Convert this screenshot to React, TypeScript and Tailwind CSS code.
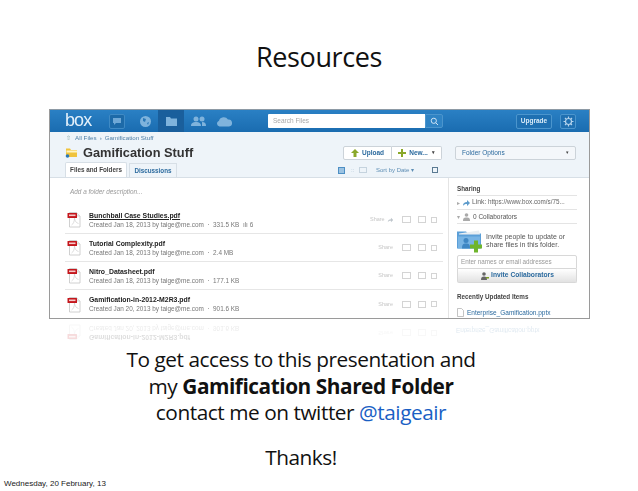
import React from "react";

const sans = "font-['Open_Sans',sans-serif]";

function PdfIcon() {
  return (
    <svg width="15" height="17" viewBox="0 0 15 17" className="shrink-0">
      <path d="M2.500 1.500h7l3.500 3.500v11h-10.500z" fill="#fff" stroke="#c4c4c4" strokeWidth="0.8" />
      <path d="M9.500 1.500v3.500h3.500" fill="#eee" stroke="#c4c4c4" strokeWidth="0.6" />
      <path d="M4.500 14c2-1 3-4 3-7 0 3 2 5 4 5.500" fill="none" stroke="#cfcfcf" strokeWidth="0.7" />
      <rect x="0.500" y="2" width="9.500" height="5" rx="0.500" fill="#c4161c" />
      <rect x="2" y="3.500" width="6.500" height="1.600" fill="#f5c9c9" />
    </svg>
  );
}

function RowActions({ arrow }: { arrow?: boolean }) {
  return (
    <div className="flex items-center w-[73px] shrink-0 text-[5.500px] text-[#c6c6c6]">
      <span className="w-[23px] flex items-center justify-end gap-[2px]">
        Share
        {arrow && (
          <svg width="8" height="8" viewBox="0 0 8 8"><path d="M1 7c0-3 1.500-4 4-4V1l3 3-3 3V5c-2 0-3 .5-4 2z" fill="#bfc6cc" /></svg>
        )}
      </span>
      <span className="ml-[9px] w-[9px] h-[7px] border border-[#d4d4d4]" />
      <span className="ml-[7px] w-[8px] h-[7px] border border-[#d4d4d4]" />
      <span className="ml-[5px] w-[6px] h-[6px] border border-[#d4d4d4]" />
    </div>
  );
}

const files = [
  { n: "Bunchball Case Studies.pdf", m: "Created Jan 18, 2013 by taige@me.com  ·  331.5 KB  ılı 6", u: true, a: true },
  { n: "Tutorial Complexity.pdf", m: "Created Jan 18, 2013 by taige@me.com  ·  2.4 MB" },
  { n: "Nitro_Datasheet.pdf", m: "Created Jan 18, 2013 by taige@me.com  ·  177.1 KB" },
  { n: "Gamification-in-2012-M2R3.pdf", m: "Created Jan 20, 2013 by taige@me.com  ·  901.6 KB" },
];

function FileRow({ f }: { f: (typeof files)[number] }) {
  return (
    <div className="h-[28px] flex items-center pl-[2px] border-b border-[#e6e6e6] last:border-b-0">
      <PdfIcon />
      <div className="ml-[7px] flex-1 leading-[9px]">
        <div className={`text-[6.900px] font-bold text-[#222] ${f.u ? "underline" : ""}`}>{f.n}</div>
        <div className="text-[6.400px] text-[#777] whitespace-pre">{f.m}</div>
      </div>
      <RowActions arrow={f.a} />
    </div>
  );
}

function TopBar() {
  return (
    <div className="h-[23px] flex items-center bg-gradient-to-b from-[#2a80c4] to-[#1a6cb0] border-t border-[#8d9aa5]">
      <span className="ml-[15px] w-[27px] text-[18px] leading-[17px] text-[#e4f1fb] tracking-[-0.9px] -mt-[2px]">box</span>
      <span className="ml-[17px] w-[16px] h-[15px] flex items-center justify-center rounded-[2px] border border-[#3f8ac4] bg-[#1d6aa8]">
        <svg width="10" height="9" viewBox="0 0 10 9"><path d="M1 1h8v5H4L2 8V6H1z" fill="#6fa8d6" /></svg>
      </span>
      <svg className="ml-[14px]" width="13" height="13" viewBox="0 0 13 13"><circle cx="6.500" cy="6.500" r="5.500" fill="#7fb3dc" /><path d="M4 3l3 1-1 3-2-1zM8 8l2-1-1 3z" fill="#2a78b8" /></svg>
      <span className="ml-[6px] w-[26px] h-[22px] flex items-center justify-center bg-[#1a5f9c]">
        <svg width="13" height="11" viewBox="0 0 13 11"><path d="M1 1h4l1 1.500h6V10H1z" fill="#7fb3dc" /></svg>
      </span>
      <svg className="ml-[6px]" width="17" height="11" viewBox="0 0 17 11"><circle cx="6" cy="3" r="2.500" fill="#7fb3dc" /><circle cx="12" cy="3" r="2.500" fill="#7fb3dc" /><path d="M1 10c0-3 2-4 5-4s5 1 5 4zM12 6c3 0 4 1.500 4 4h-4z" fill="#7fb3dc" /></svg>
      <svg className="ml-[9px]" width="17" height="11" viewBox="0 0 17 11"><path d="M3.500 10.500a3 3 0 0 1-.5-5.800A5 5 0 0 1 12 3.500a3.500 3.500 0 0 1 1 7z" fill="#7fb3dc" /></svg>
      <div className="ml-[35px] w-[157px] h-[14px] bg-white rounded-l-[1px] flex items-center pl-[5px] text-[6.500px] text-[#a8a8a8]">Search Files</div>
      <div className="w-[18px] h-[14px] bg-[#2f83c4] border border-[#4b95cd] rounded-r-[2px] flex items-center justify-center">
        <svg width="9" height="9" viewBox="0 0 9 9" fill="none" stroke="#cfe4f5" strokeWidth="1"><circle cx="3.800" cy="3.800" r="2.600" /><path d="M5.700 5.700L8 8" /></svg>
      </div>
      <div className="ml-[73px] w-[36px] h-[15px] rounded-[2px] border border-[#4b95cd] bg-[#1f70b2] text-[6.500px] font-bold text-[#d9ebf8] flex items-center justify-center">Upgrade</div>
      <div className="ml-[8px] w-[16px] h-[15px] rounded-[2px] border border-[#4b95cd] bg-[#1f70b2] flex items-center justify-center">
        <svg width="11" height="11" viewBox="0 0 11 11" fill="none" stroke="#b4d3ec" strokeWidth="1.200"><circle cx="5.500" cy="5.500" r="3" /><path d="M5.500 0.500v2M5.500 8.500v2M0.500 5.500h2M8.500 5.500h2M2 2l1.400 1.400M7.600 7.600L9 9M2 9l1.400-1.400M7.600 3.400L9 2" /></svg>
      </div>
    </div>
  );
}

function Header() {
  return (
    <div className="h-[46px] bg-[#eef4f9] border-b border-[#d7dfe6] relative flex flex-col">
      <div className="h-[12px] flex items-center pl-[16px] text-[6.200px] text-[#4d7ea6] gap-[3px]">
        <span className="text-[#8aa] mr-[1px]">⇧</span><span>All Files</span><span>›</span><span>Gamification Stuff</span>
      </div>
      <div className="h-[20px] flex items-center pl-[15px]">
        <svg width="13" height="11" viewBox="0 0 13 11"><path d="M1 3V1.500h4l1 1.500h6v7H1z" fill="#f0c33c" /><path d="M1.500 3.500h10.500v2H1.500z" fill="#fff4c0" /><circle cx="2.500" cy="9" r="1.800" fill="#2a78b8" /></svg>
        <span className="ml-[5px] text-[12.800px] leading-[14px] font-bold text-[#333]">Gamification Stuff</span>
      </div>
      <div className="flex-1 flex items-end pl-[15px] text-[6.300px] font-bold">
        <div className="h-[15px] w-[62px] bg-white border border-b-0 border-[#d7dfe6] rounded-t-[2px] flex items-center justify-center text-[#444]">Files and Folders</div>
        <div className="ml-[2px] h-[14px] w-[48px] border border-b-0 border-[#d7dfe6] flex items-center justify-center text-[#2b6a9e]">Discussions</div>
      </div>

      <div className="absolute right-[13px] top-[14px] flex items-start text-[#2b6a9e] text-[6.500px] font-bold">
        <div className="h-[14px] w-[49px] bg-white border border-[#ccd3d9] rounded-l-[2px] flex items-center justify-center gap-[3px]">
          <svg width="8" height="8" viewBox="0 0 8 8"><path d="M4 0l4 4H5.500v4h-3V4H0z" fill="#8aa82a" /></svg>Upload
        </div>
        <div className="h-[14px] w-[50px] bg-white border border-l-0 border-[#ccd3d9] rounded-r-[2px] flex items-center justify-center gap-[3px]">
          <svg width="8" height="8" viewBox="0 0 8 8"><path d="M3 0h2v3h3v2H5v3H3V5H0V3h3z" fill="#8aa82a" /></svg>New...<span className="text-[#444] text-[5px] ml-[1px]">▾</span>
        </div>
        <div className="ml-[13px] h-[14px] w-[121px] bg-[#f4f7fa] border border-[#ccd3d9] rounded-[2px] flex items-center justify-between px-[6px] font-normal">Folder Options<span className="text-[#444] text-[5px]">▾</span></div>
      </div>

      <div className="absolute right-[151px] bottom-[1px] h-[12px] flex items-center text-[6px] text-[#5d8db4]">
        <span className="w-[7px] h-[7px] border border-[#4d8fc4] bg-[#9cc3e2]" />
        <span className="ml-[6px] w-[5px] text-[6px] leading-none text-[#a9c0d2]">::</span>
        <span className="ml-[3px] w-[8px] h-[6px] border border-[#c5d3de]" />
        <span className="ml-[9px]">Sort by Date ▾</span>
        <span className="ml-[18px] w-[6px] h-[6px] border border-[#5a7a92]" />
      </div>
    </div>
  );
}

function Sidebar() {
  return (
    <div className="w-[141px] shrink-0 ml-[5px] border-l border-[#e4e4e4] pl-[8px] pr-[12px] pt-[6px] text-[6.300px] text-[#555]">
      <div className="h-[12px] font-bold text-[#444] border-b border-[#e4e4e4]">Sharing</div>
      <div className="h-[14px] flex items-center border-b border-[#e4e4e4] gap-[2px]">
        <span className="text-[#aaa]">▸</span>
        <svg width="8" height="8" viewBox="0 0 8 8"><path d="M1 7c0-3 1.500-4 4-4V1l3 3-3 3V5c-2 0-3 .5-4 2z" fill="#5d9bcb" /></svg>
        <span className="text-[#666] whitespace-nowrap"><span className="text-[6.800px]">Link:</span> https://www.box.com/s/75...</span>
      </div>
      <div className="h-[14px] flex items-center border-b border-[#e4e4e4] gap-[3px]">
        <span className="text-[#aaa]">▾</span>
        <svg width="7" height="8" viewBox="0 0 7 8"><circle cx="3.500" cy="2" r="1.800" fill="#aaa" /><path d="M0 8c0-3 1-3.500 3.500-3.500S7 5 7 8z" fill="#aaa" /></svg>
        <span className="text-[6.500px]">0 Collaborators</span>
      </div>
      <div className="mt-[3px] h-[28px] flex items-center gap-[4px]">
        <svg width="25" height="26" viewBox="0 0 25 25" className="shrink-0">
          <path d="M0 3h9l2 2h13v15H0z" fill="#5b9fd8" />
          <path d="M2 5l20-3 1 4H2z" fill="#e9eef2" />
          <path d="M1 8h22v12H1z" fill="#78b4e4" />
          <circle cx="9" cy="12" r="2.500" fill="#3f87c4" />
          <path d="M5 20c0-4 1-5 4-5s4 1 4 5z" fill="#3f87c4" />
          <path d="M17 12h4v4h4v4h-4v4h-4v-4h-4v-4h4z" fill="#6fb52c" />
        </svg>
        <div className="leading-[8px] text-[7px]">Invite people to update or<br />share files in this folder.</div>
      </div>
      <div className="h-[14px] border border-[#d8d8d8] rounded-t-[2px] flex items-center pl-[3px] text-[#999]">Enter names or email addresses</div>
      <div className="h-[14px] border border-t-0 border-[#d8d8d8] bg-gradient-to-b from-white to-[#e2e2e2] rounded-b-[2px] flex items-center justify-center gap-[2px] text-[6.700px] font-bold text-[#2b6a9e]">
        <svg width="9" height="8" viewBox="0 0 9 8"><circle cx="4" cy="2" r="1.800" fill="#666" /><path d="M1 8c0-3 1-3.500 3-3.500S7 5 7 8z" fill="#666" /><path d="M6 5h3v1.500H6z" fill="#7a9a25" /></svg>
        Invite Collaborators
      </div>
      <div className="mt-[9px] h-[13px] font-bold text-[#444]">Recently Updated Items</div>
      <div className="mt-[3px] flex items-center gap-[3px] text-[#2b6a9e] text-[6.500px]">
        <svg width="7" height="9" viewBox="0 0 7 9" fill="#fff" stroke="#aaa" strokeWidth="0.7"><path d="M.5.500h4l2 2v6h-6z" /></svg>
        Enterprise_Gamification.pptx
      </div>
    </div>
  );
}

function Shot() {
  return (
    <div className="w-[539px] h-[209px] overflow-hidden bg-white blur-[0.45px]">
      <TopBar />
      <Header />
      <div className="flex">
        <div className="flex-1 pl-[15px]">
          <div className="h-[28px] pt-[9px] pl-[5px] text-[6.400px] italic text-[#999]">Add a folder description...</div>
          {files.map((f) => <FileRow key={f.n} f={f} />)}
        </div>
        <Sidebar />
      </div>
    </div>
  );
}

export default function App() {
  return (
    <div className="relative w-[638px] h-[491px] bg-white overflow-hidden flex flex-col items-center font-['Liberation_Sans',sans-serif]">
      <h1 className={`${sans} mt-[36px] h-[73px] text-[27px] leading-[42px] text-[#111] tracking-[-0.4px]`}>Resources</h1>
      <div className="w-[539px] self-start ml-[49px] border-b border-x border-[#9a9a9a] box-content">
        <Shot />
      </div>
      <div className="w-[539px] h-[28px] self-start ml-[50px] overflow-hidden opacity-15 -scale-y-100 blur-[0.4px] flex items-end">
        <div className="flex-1 pl-[15px]">
          <FileRow f={files[3]} />
        </div>
        <div className="w-[146px] shrink-0 pl-[13px] pb-[6px] text-[6.500px] text-[#2b6a9e]">Enterprise_Gamification.pptx</div>
      </div>
      <div className={`${sans} absolute top-[346px] left-0 w-[602px] text-center text-[20.800px] leading-[26.500px] text-[#111] tracking-[-0.45px]`}>
        <p>To get access to this presentation and</p>
        <p>my <b className="font-bold">Gamification Shared Folder</b></p>
        <p>contact me on twitter <span className="text-[#1a5fc4]">@taigeair</span></p>
        <p className="mt-[18px]">Thanks!</p>
      </div>
      <div className="absolute left-[4px] top-[479px] text-[8px] leading-[10px] text-[#222]">Wednesday, 20 February, 13</div>
    </div>
  );
}
